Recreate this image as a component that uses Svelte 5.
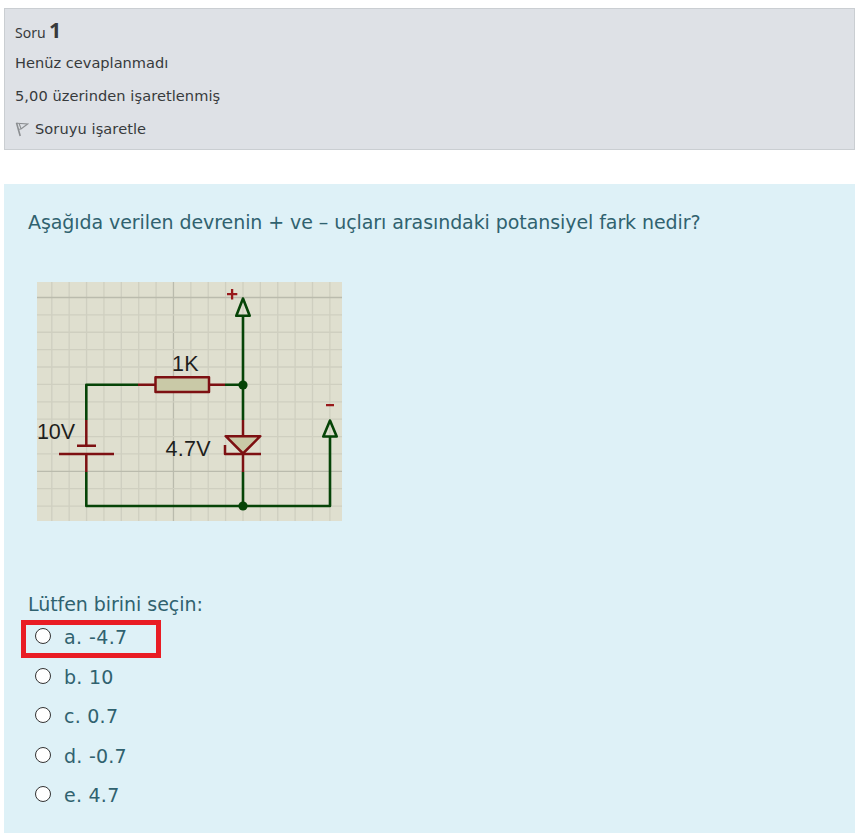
<script>
  const options = [
    { key: 'a', text: '-4.7', marked: true },
    { key: 'b', text: '10' },
    { key: 'c', text: '0.7' },
    { key: 'd', text: '-0.7' },
    { key: 'e', text: '4.7' }
  ];
  const columns = Array.from({ length: 17 }, (_, i) => 14.8 + i * 17.38);
  const rows = Array.from({ length: 13 }, (_, i) => 15.5 + i * 17.38);
</script>

<main>
  <section class="info">
    <h3><span class="soru">Soru</span> <span class="no">1</span></h3>
    <div class="line l1">Henüz cevaplanmadı</div>
    <div class="line l2">5,00 üzerinden işaretlenmiş</div>
    <div class="line flag">
      <svg width="14" height="16" viewBox="0 0 14 16" fill="none" stroke="#8b8e91">
        <path d="M1.5 1.8 5.2 15" stroke-width="1.6" />
        <path d="M1.8 2.3 12.6 3 6 8 3.6 8.3M4.2 2.7 6 7.7" stroke-width="1.1" />
      </svg>
      <span class="l3">Soruyu işaretle</span>
    </div>
  </section>

  <section class="question">
    <p class="qtext"><span>Aşağıda verilen devrenin + ve – uçları arasındaki potansiyel fark nedir?</span></p>

    <svg class="circuit" width="305" height="239" viewBox="0 0 305 239">
      <rect width="305" height="239" fill="#dfdfcf" />
      <g stroke="#cfcfc0" stroke-width="1.3">
        {#each columns as x, i}
          <path d="M{x} 0V239" stroke={i === 7 ? '#babbad' : undefined} />
        {/each}
        {#each rows as y, i}
          <path d="M0 {y}H305" stroke={i % 10 === 0 ? '#babbad' : undefined} />
        {/each}
      </g>
      <g fill="none" stroke="#064407" stroke-width="2.6" stroke-linejoin="round">
        <path d="M101 102.7H49.3V138M49.3 190V224H293V155" />
        <path d="M206 34V138M206 190V224M188 102.7H206" />
        <path d="M206 16.5 199.3 33.8H212.7ZM293 138.5 286.3 154.5H299.7Z" />
      </g>
      <circle cx="206" cy="103" r="4.6" fill="#064407" />
      <circle cx="206" cy="224" r="4.6" fill="#064407" />
      <g fill="none" stroke="#7d1012" stroke-width="2.5" stroke-linejoin="round">
        <path d="M49.3 138V163.5M49.3 172V190M40 163.7H59M22 172H77" />
        <path d="M101 102.7H118M172 102.7H188" />
        <rect x="118.5" y="95.3" width="53.5" height="14.8" fill="#c9c9a7" />
        <path d="M188.7 154.2H223.3L206 171.5Z" fill="#c9c9a7" />
        <path d="M206 138V154M206 171V190M188 163V172H224" />
      </g>
      <path d="M190 12.2H200.3M195.1 7V17.4M289 123.2H297" fill="none" stroke="#98191b" stroke-width="2.3" />
      <g class="labels">
        <text x="135" y="89.4" textLength="26.5">1K</text>
        <text x="0" y="157" textLength="38">10V</text>
        <text x="128.5" y="174" textLength="45">4.7V</text>
      </g>
    </svg>

    <p class="prompt"><span>Lütfen birini seçin:</span></p>
    <div class="answers">
      {#each options as option}
        <label class:marked={option.marked}>
          <input type="radio" name="answer" value={option.key} />
          <span>{option.key}. {option.text}</span>
        </label>
      {/each}
    </div>
  </section>
</main>

<style>
  :global(body) { background: #fff; }
  main {
    box-sizing: border-box;
    width: 861px;
    height: 833px;
    padding: 8px 6px 0 4px;
    font-family: 'DejaVu Sans', Verdana, sans-serif;
    overflow: hidden;
  }
  .info {
    box-sizing: border-box;
    height: 142px;
    padding: 6px 10px 0;
    border: 1px solid #caced2;
    background: #dee1e6;
    color: #373a3c;
  }
  h3 {
    display: flex;
    align-items: baseline;
    gap: 3.5px;
    height: 31px;
    margin: 0;
    line-height: 29px;
    font-weight: 400;
  }
  .soru { font: 14px/29px 'Noto Sans', sans-serif; }
  .no { font: 700 21.5px/29px 'Noto Sans', sans-serif; }
  .line { height: 33px; line-height: 33px; font-size: 14.6px; white-space: pre; }
  .l2 { letter-spacing: 0.06px; }
  .l3 { letter-spacing: 0.08px; }
  .flag { display: flex; align-items: center; gap: 6px; }
  .question {
    box-sizing: border-box;
    height: 649px;
    margin-top: 34px;
    padding: 24px 17px 0 24px;
    background: #def1f7;
    color: #30626f;
    font-size: 19px;
  }
  p { margin: 0; height: 28px; line-height: 28px; white-space: nowrap; }
  .qtext { letter-spacing: -0.075px; }
  .circuit { display: block; margin: 46px 0 0 9px; }
  .labels { font: 21.5px 'Liberation Sans', Arial, sans-serif; fill: #1e1e1c; }
  .prompt { margin-top: 69px; letter-spacing: -0.05px; }
  .answers { display: flex; flex-direction: column; align-items: flex-start; margin: 2px 0 0 -7px; }
  label {
    box-sizing: border-box;
    display: flex;
    align-items: center;
    width: 140px;
    height: 39.5px;
    padding-left: 14px;
    gap: 13px;
    line-height: 28px;
    letter-spacing: 0.25px;
    white-space: nowrap;
  }
  .marked {
    height: 38px;
    margin-bottom: -1px;
    padding: 0 0 5px 9px;
    border: 5px solid #e91c24;
    line-height: 23px;
    letter-spacing: 0.4px;
  }
  .marked span { padding-top: 2px; }
  input {
    appearance: none;
    box-sizing: border-box;
    flex: none;
    width: 16px;
    height: 16px;
    margin: 0 0 2px;
    border: 1px solid #333;
    border-radius: 50%;
    background: #fff;
  }
</style>
